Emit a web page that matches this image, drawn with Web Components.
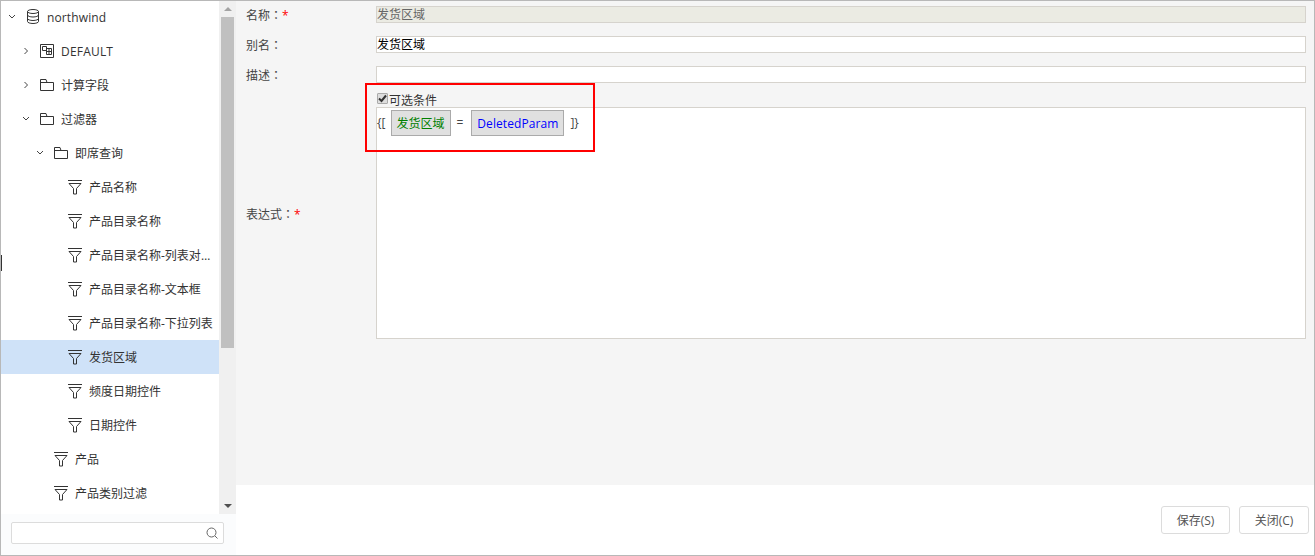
<!DOCTYPE html>
<html lang="zh">
<head>
<meta charset="utf-8">
<title>发货区域</title>
<style>
    html, body { margin: 0; height: 100%; overflow: hidden; background: #fff; }
    body { font: 12px "Open Sans", "Noto Sans CJK SC", sans-serif; color: #333; }
</style>
</head>
<body>
<filter-editor>
    <tree-panel slot="tree">
        <tree-node depth="0" icon="db" caret="down" style="letter-spacing:.12px">northwind</tree-node>
        <tree-node depth="1" icon="table" caret="right" style="letter-spacing:.2px">DEFAULT</tree-node>
        <tree-node depth="1" icon="folder" caret="right">计算字段</tree-node>
        <tree-node depth="1" icon="folder" caret="down">过滤器</tree-node>
        <tree-node depth="2" icon="folder" caret="down">即席查询</tree-node>
        <tree-node depth="3" icon="filter">产品名称</tree-node>
        <tree-node depth="3" icon="filter">产品目录名称</tree-node>
        <tree-node depth="3" icon="filter">产品目录名称-列表对象名称</tree-node>
        <tree-node depth="3" icon="filter">产品目录名称-文本框</tree-node>
        <tree-node depth="3" icon="filter">产品目录名称-下拉列表</tree-node>
        <tree-node depth="3" icon="filter" selected>发货区域</tree-node>
        <tree-node depth="3" icon="filter">频度日期控件</tree-node>
        <tree-node depth="3" icon="filter">日期控件</tree-node>
        <tree-node depth="2" icon="filter">产品</tree-node>
        <tree-node depth="2" icon="filter">产品类别过滤</tree-node>
    </tree-panel>

    <form-row slot="form" label="名称" required><text-field disabled>发货区域</text-field></form-row>
    <form-row slot="form" label="别名"><text-field>发货区域</text-field></form-row>
    <form-row slot="form" label="描述"><text-field></text-field></form-row>
    <form-row slot="form" label="表达式" required style="margin-top:-5px;--label-shift:-4px">
        <expression-box label="可选条件">
            <span class="open">{[</span>
            <expr-chip color="#008000" style="padding:0 6px 0 4px">发货区域</expr-chip>
            <span class="eq">=</span>
            <expr-chip color="#0000ff" style="letter-spacing:.08px">DeletedParam</expr-chip>
            <span class="close">]}</span>
        </expression-box>
    </form-row>

    <app-button slot="actions" style="width:69px">保存(S)</app-button>
    <app-button slot="actions">关闭(C)</app-button>
</filter-editor>

<script>
const ICONS = {
    db: `<svg width="14" height="16" viewBox="0 0 14 16" fill="none" stroke="currentColor"><ellipse cx="7" cy="2.500" rx="5.500" ry="2"/><path d="M1.500 2.500v10c0 1.100 2.500 2 5.500 2s5.500-.9 5.500-2v-10M1.500 6c0 1.100 2.500 2 5.500 2s5.500-.9 5.500-2M1.500 9.500c0 1.100 2.500 2 5.500 2s5.500-.9 5.500-2"/></svg>`,
    table: `<svg width="14" height="16" viewBox="0 0 14 16" fill="none" stroke="currentColor"><path d="M.5 1.500h13v13H.5zM2.500 3.500h4v4h-4zM6.500 5.500h5v6h-5zM6.500 8.500h5M9 5.500v6"/></svg>`,
    folder: `<svg width="14" height="16" viewBox="0 0 14 16" fill="none" stroke="currentColor"><path d="M.5 2.500H6L7 5.500h6.500v8H.5zM.5 5.500H7"/></svg>`,
    filter: `<svg width="14" height="16" viewBox="0 0 14 16" fill="none" stroke="currentColor"><path d="M0 1.500h14M1 4.500l4.500 5v5.500h3v-5.500l4.500-5z"/></svg>`
};
const CARETS = {
    down: `<svg width="8" height="6" viewBox="0 0 8 6" fill="none" stroke="#444"><path d="M1 1l3 3 3-3"/></svg>`,
    right: `<svg width="6" height="8" viewBox="0 0 6 8" fill="none" stroke="#444"><path d="M1.500 1l3 3-3 3"/></svg>`
};

class FilterEditor extends HTMLElement {
    constructor() {
        super();
        this.attachShadow({ mode: 'open' }).innerHTML = `
            <style>
                :host { display: flex; box-sizing: border-box; height: 556px; border: 1px solid #b8b8b8; background: #fff; }
                .left { flex: 0 0 235px; min-width: 0; display: flex; flex-direction: column; background: #fbfcfd; }
                .right { flex: 1; min-width: 0; display: flex; flex-direction: column; }
                .form { flex: 1; position: relative; background: #f5f5f5; padding: 5px 8px 0 10px; display: flex; flex-direction: column; gap: 13px; }
                .marker { position: absolute; left: 129px; top: 82px; width: 226px; height: 65px; border: 2px solid #f00; }
                .actions { flex: 0 0 70px; background: #fff; display: flex; justify-content: flex-end; align-items: flex-start; gap: 9px; padding: 21px 5px 0 0; box-sizing: border-box; }
                .search { flex: 0 0 41px; box-sizing: border-box; padding: 8px 12px 0 10px; }
            </style>
            <div class="left">
                <slot name="tree"></slot>
                <div class="search"><search-box></search-box></div>
            </div>
            <div class="right">
                <div class="form">
                    <slot name="form"></slot>
                    <div class="marker"></div>
                </div>
                <div class="actions"><slot name="actions"></slot></div>
            </div>`;
    }
}

class TreePanel extends HTMLElement {
    constructor() {
        super();
        this.attachShadow({ mode: 'open' }).innerHTML = `
            <style>
                :host { display: flex; height: 513px; position: relative; background: #fff; overflow: hidden; }
                .list { flex: 1; min-width: 0; margin-top: -1px; }
                .bar { flex: 0 0 17px; display: flex; flex-direction: column; background: #f0f0f0; }
                .arrow { flex: 0 0 16px; display: flex; align-items: center; justify-content: center; }
                .thumb { margin: 0 2px; height: 331px; background: #c0c0c0; }
                .rest { flex: 1; }
                .up { width: 0; height: 0; border: 4px solid transparent; border-top: 0; border-bottom-color: #a3a3a3; }
                .down { width: 0; height: 0; border: 4px solid transparent; border-bottom: 0; border-top-color: #505050; }
                .cursor { position: absolute; left: 0; top: 254px; width: 1px; height: 16px; background: #333; }
            </style>
            <div class="list"><slot></slot></div>
            <div class="bar">
                <div class="arrow"><div class="up"></div></div>
                <div class="thumb"></div>
                <div class="rest"></div>
                <div class="arrow"><div class="down"></div></div>
            </div>
            <div class="cursor"></div>`;
    }
}

class TreeNode extends HTMLElement {
    constructor() {
        super();
        const depth = Number(this.getAttribute('depth') || 0);
        const caret = CARETS[this.getAttribute('caret')] || '';
        const icon = ICONS[this.getAttribute('icon')] || '';
        this.attachShadow({ mode: 'open' }).innerHTML = `
            <style>
                :host { display: flex; align-items: center; height: 34px; box-sizing: border-box; color: #333; padding: 0 3px 0 ${5 + depth * 14}px; }
                :host([selected]) { background: #cfe2f8; }
                .caret { flex: 0 0 12px; display: flex; justify-content: center; margin-right: 8px; }
                .icon { flex: 0 0 14px; height: 16px; margin-right: 7px; color: #333; }
                svg { display: block; }
                .text { flex: 1; min-width: 0; padding-top: 1px; white-space: nowrap; overflow: hidden; text-overflow: ellipsis; line-height: 18px; }
            </style>
            <span class="caret">${caret}</span>
            <span class="icon">${icon}</span>
            <span class="text"><slot></slot></span>`;
    }
}

class SearchBox extends HTMLElement {
    constructor() {
        super();
        this.attachShadow({ mode: 'open' }).innerHTML = `
            <style>
                :host { display: flex; align-items: center; justify-content: flex-end; box-sizing: border-box; height: 22px; background: #fff; border: 1px solid #dcdcdc; border-radius: 2px; padding-right: 5px; }
                svg { display: block; }
            </style>
            <svg width="12" height="12" viewBox="0 0 12 12" fill="none" stroke="#666"><circle cx="5.500" cy="5.500" r="4.500"/><path d="M9 9l2.500 2.500"/></svg>`;
    }
}

class FormRow extends HTMLElement {
    constructor() {
        super();
        const star = this.hasAttribute('required') ? '<span class="star">*</span>' : '';
        this.attachShadow({ mode: 'open' }).innerHTML = `
            <style>
                :host { display: flex; align-items: center; }
                .label { flex: 0 0 130px; height: 15px; color: #444; line-height: 15px; margin-top: var(--label-shift, 0); white-space: nowrap; }
                .colon { font-family: "Noto Sans CJK TC", sans-serif; }
                .star { color: #f00; }
                .field { flex: 1; min-width: 0; }
            </style>
            <div class="label">${this.getAttribute('label')}<span class="colon" lang="zh-Hant">：</span>${star}</div>
            <div class="field"><slot></slot></div>`;
    }
}

class TextField extends HTMLElement {
    constructor() {
        super();
        this.attachShadow({ mode: 'open' }).innerHTML = `
            <style>
                :host { display: block; box-sizing: border-box; height: 17px; line-height: 15px; background: #fff; border: 1px solid #d6d3cd; color: #000; white-space: nowrap; overflow: hidden; }
                :host([disabled]) { background: #ebebe3; color: #666; }
            </style>
            <slot></slot>`;
    }
}

class ExpressionBox extends HTMLElement {
    constructor() {
        super();
        this.attachShadow({ mode: 'open' }).innerHTML = `
            <style>
                :host { display: block; }
                .check { display: flex; align-items: center; height: 16px; color: #333; }
                .box { box-sizing: border-box; width: 11px; height: 11px; margin: 0 1px 1px 1px; background: #ddd; border: 1px solid #aaa; border-radius: 1px; display: flex; }
                .check .caption { margin-top: 4px; line-height: 14px; }
                .editor { box-sizing: border-box; height: 232px; padding: 2px 0 0 0; background: #fff; border: 1px solid #d6d3cd; display: flex; align-items: flex-start; color: #444; line-height: 26px; }
                ::slotted(.open) { margin-right: 6px; }
                ::slotted(.eq) { margin: 0 8px 0 5px; }
                ::slotted(.close) { margin-left: 6px; }
            </style>
            <div class="check">
                <span class="box"><svg width="9" height="9" viewBox="0 0 9 9" fill="none" stroke="#333" stroke-width="2"><path d="M1 4.500l2.500 2.500L8 1.500"/></svg></span>
                <span class="caption">${this.getAttribute('label')}</span>
            </div>
            <div class="editor"><slot></slot></div>`;
    }
}

class ExprChip extends HTMLElement {
    constructor() {
        super();
        this.attachShadow({ mode: 'open' }).innerHTML = `
            <style>
                :host { display: block; box-sizing: border-box; height: 26px; line-height: 26px; padding: 0 5px; background: #e0e0e0; border: 1px solid #aaa; white-space: nowrap; color: ${this.getAttribute('color')}; }
            </style>
            <slot></slot>`;
    }
}

class AppButton extends HTMLElement {
    constructor() {
        super();
        this.attachShadow({ mode: 'open' }).innerHTML = `
            <style>
                :host { display: flex; align-items: center; justify-content: center; box-sizing: border-box; width: 70px; height: 28px; background: #fff; border: 1px solid #dcdcdc; border-radius: 3px; color: #555; white-space: nowrap; }
            </style>
            <slot></slot>`;
    }
}

customElements.define('filter-editor', FilterEditor);
customElements.define('tree-panel', TreePanel);
customElements.define('tree-node', TreeNode);
customElements.define('search-box', SearchBox);
customElements.define('form-row', FormRow);
customElements.define('text-field', TextField);
customElements.define('expression-box', ExpressionBox);
customElements.define('expr-chip', ExprChip);
customElements.define('app-button', AppButton);
</script>
</body>
</html>
